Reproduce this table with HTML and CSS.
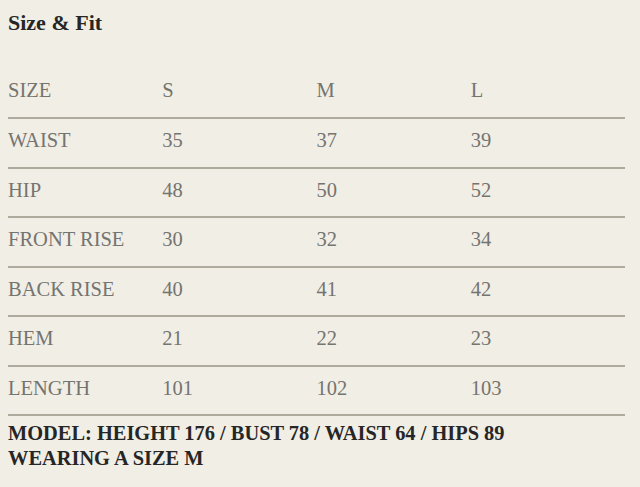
FILE: index.html
```html
<!DOCTYPE html>
<html>
<head>
<meta charset="utf-8">
<link rel="stylesheet" href="styles.css">
</head>
<body>
<div class="page">
  <h2 class="title">Size &amp; Fit</h2>
  <div class="table">
    <div class="row head"><span>SIZE</span><span>S</span><span>M</span><span>L</span></div>
    <div class="row"><span>WAIST</span><span>35</span><span>37</span><span>39</span></div>
    <div class="row"><span>HIP</span><span>48</span><span>50</span><span>52</span></div>
    <div class="row"><span>FRONT RISE</span><span>30</span><span>32</span><span>34</span></div>
    <div class="row"><span>BACK RISE</span><span>40</span><span>41</span><span>42</span></div>
    <div class="row"><span>HEM</span><span>21</span><span>22</span><span>23</span></div>
    <div class="row"><span>LENGTH</span><span>101</span><span>102</span><span>103</span></div>
  </div>
  <p class="model">MODEL: HEIGHT 176 / BUST 78 / WAIST 64 / HIPS 89<br>WEARING A SIZE M</p>
</div>
</body>
</html>
```
FILE: styles.css
```css
html, body {
  margin: 0;
  padding: 0;
  background: #f1eee5;
}
.page {
  padding: 0 15px 0 8px;
  font-family: "Liberation Serif", "Times New Roman", serif;
}
.title {
  margin: 0;
  padding-top: 10px;
  height: 56px;
  box-sizing: border-box;
  font-size: 22px;
  font-weight: bold;
  color: #262626;
  line-height: 26px;
}
.table {
  display: flex;
  flex-direction: column;
}
.row {
  display: grid;
  grid-template-columns: repeat(4, 1fr);
  height: 49.5px;
  align-items: start;
  border-bottom: 2px solid #aeab9e;
  box-sizing: border-box;
  font-size: 20.5px;
  line-height: 24px;
  color: #747470;
  padding-top: 9px;
}
.head {
  height: 63px;
  padding-top: 22px;
}
.model {
  margin: 0;
  padding-top: 5px;
  font-size: 20.4px;
  font-weight: bold;
  color: #262626;
  line-height: 25px;
}
```
